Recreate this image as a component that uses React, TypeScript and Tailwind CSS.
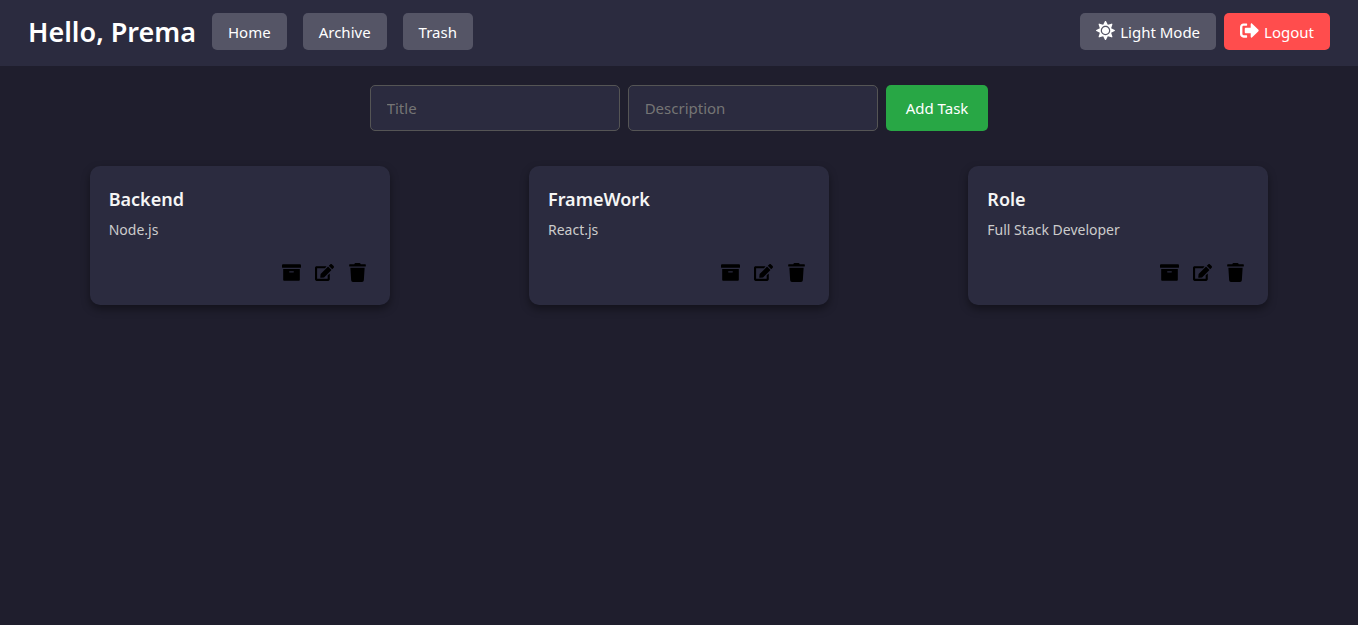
import { useState } from "react";
import { FaArchive, FaEdit, FaSignOutAlt, FaSun, FaTrash } from "react-icons/fa";

type Task = { title: string; description: string };

const tasks: Task[] = [
  { title: "Backend", description: "Node.js" },
  { title: "FrameWork", description: "React.js" },
  { title: "Role", description: "Full Stack Developer" },
];

const navItems = ["Home", "Archive", "Trash"];

function TaskCard({ title, description }: Task) {
  return (
    <article className="w-[300px] rounded-[10px] bg-[#2b2b3f] px-[19px] pt-[19px] pb-[18px] shadow-[0_4px_8px_rgba(0,0,0,0.4)]">
      <h2 className="text-lg leading-7 font-semibold text-[#f5f5f5]">{title}</h2>
      <p className="mt-[5px] text-sm leading-6 text-[#cccccc]">{description}</p>
      <div className="mt-4 flex justify-end gap-[14px] pr-1 text-[19px] text-black">
        <button type="button" aria-label={`Archive ${title}`} className="py-[5px]">
          <FaArchive />
        </button>
        <button type="button" aria-label={`Edit ${title}`} className="py-[5px]">
          <FaEdit />
        </button>
        <button type="button" aria-label={`Delete ${title}`} className="py-[5px]">
          <FaTrash />
        </button>
      </div>
    </article>
  );
}

export default function App() {
  const [title, setTitle] = useState("");
  const [description, setDescription] = useState("");
  const field =
    "h-[46px] w-[250px] rounded-[5px] border border-[#555555] bg-[#2b2b3f] px-4 text-[15px] text-white outline-none placeholder:text-[#757575]";

  return (
    <div className="min-h-screen bg-[#1f1e2d] font-['Noto_Sans',sans-serif] text-[15px] text-white">
      <header className="flex items-center justify-between bg-[#2b2b3f] px-7 pt-[13px] pb-4">
        <div className="flex items-center gap-4">
          <h1 className="pt-px text-[27px] leading-9 font-semibold">Hello, Prema</h1>
          <nav className="flex gap-4">
            {navItems.map((item) => (
              <button key={item} type="button" className="h-[37px] rounded-[5px] bg-[#555566] px-4 pt-0.5">
                {item}
              </button>
            ))}
          </nav>
        </div>
        <div className="flex gap-2">
          <button type="button" className="flex h-[37px] items-center gap-[5px] rounded-[5px] bg-[#555566] px-4 pt-0.5">
            <FaSun className="mb-1 text-[19px]" />
            Light Mode
          </button>
          <button type="button" className="flex h-[37px] items-center gap-[5px] rounded-[5px] bg-[#ff4d4d] px-4 pt-0.5">
            <FaSignOutAlt className="mb-1 text-[19px]" />
            Logout
          </button>
        </div>
      </header>
      <main className="px-5 pt-[19px]">
        <form className="flex flex-wrap justify-center gap-2" onSubmit={(e) => e.preventDefault()}>
          <input
            aria-label="Title"
            placeholder="Title"
            value={title}
            onChange={(e) => setTitle(e.target.value)}
            className={field}
          />
          <input
            aria-label="Description"
            placeholder="Description"
            value={description}
            onChange={(e) => setDescription(e.target.value)}
            className={field}
          />
          <button type="submit" className="h-[46px] rounded-[5px] bg-[#28a745] px-5">
            Add Task
          </button>
        </form>
        <section className="mt-[35px] grid grid-cols-1 justify-items-center gap-y-5 md:grid-cols-2 lg:grid-cols-3">
          {tasks.map((task) => (
            <TaskCard key={task.title} {...task} />
          ))}
        </section>
      </main>
    </div>
  );
}
